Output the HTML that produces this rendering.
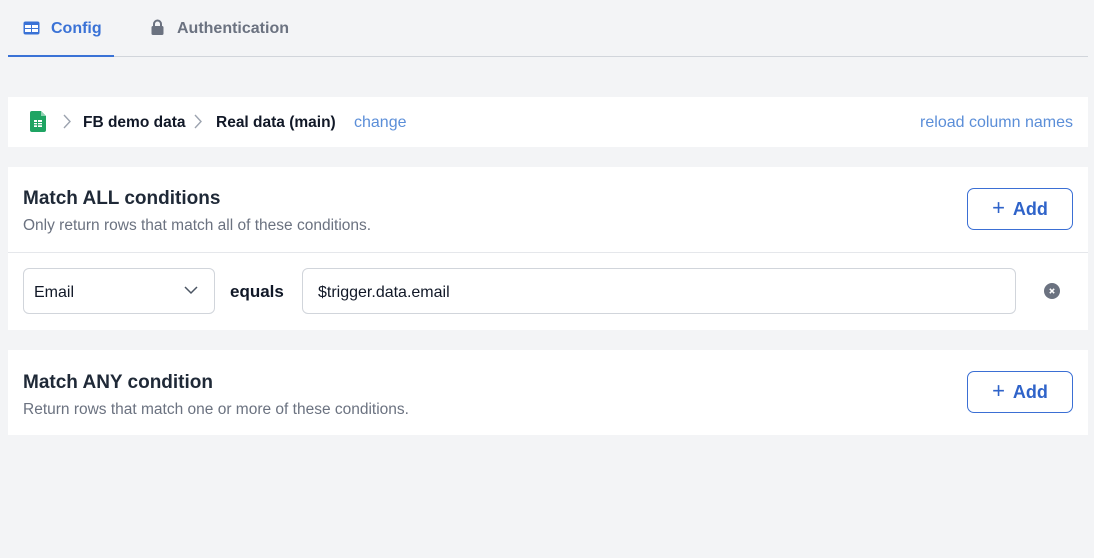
<!DOCTYPE html>
<html><head><style>
*{box-sizing:border-box;margin:0;padding:0}
body{width:1094px;height:558px;background:#f3f4f6;font-family:"Liberation Sans",sans-serif;position:relative;overflow:hidden;color:#111827}
.abs{position:absolute}
.card{position:absolute;left:8px;width:1080px;background:#fff}
.blue{color:#3a72d6}
.btn{position:absolute;left:967px;width:106px;height:42px;border:1px solid #3b6fd4;border-radius:7px;color:#2f63c9;font-weight:bold;font-size:18px;display:flex;align-items:center;justify-content:center;gap:8px}
.btn span{font-weight:normal;font-size:22px;margin-top:-3px}
h2{font-size:19px;font-weight:bold;color:#1f2937;position:absolute;left:15px}
.sub{position:absolute;left:15px;font-size:15.5px;color:#6b7280}
</style></head><body>
<div class="abs" style="left:8px;top:56px;width:1080px;height:1px;background:#d1d5db"></div>
<div class="abs" style="left:8px;top:55px;width:106px;height:2px;background:#3a72d6"></div>
<svg class="abs" style="left:23px;top:21px" width="17" height="14" viewBox="0 0 17 14"><rect x="0.5" y="0.5" width="16" height="13" rx="2" fill="#3a72d6"/><g fill="#fff"><rect x="2" y="4" width="6" height="3"/><rect x="9" y="4" width="6" height="3"/><rect x="2" y="8" width="6" height="3"/><rect x="9" y="8" width="6" height="3"/></g></svg>
<div class="abs blue" style="left:51px;top:20px;font-size:16px;font-weight:bold">Config</div>
<svg class="abs" style="left:151px;top:19px" width="13" height="16" viewBox="0 0 13 16"><path d="M3 7V5a3.5 3.5 0 0 1 7 0v2" stroke="#6b7280" stroke-width="2" fill="none"/><rect x="0.5" y="7" width="12" height="9" rx="1.5" fill="#6b7280"/></svg>
<div class="abs" style="left:177px;top:20px;font-size:16px;font-weight:bold;color:#6b7280">Authentication</div>

<div class="card" style="top:97px;height:50px">
<svg class="abs" style="left:22px;top:14px" width="16" height="21" viewBox="0 0 16 21"><path d="M0 2a2 2 0 0 1 2-2h9l5 5v14a2 2 0 0 1-2 2H2a2 2 0 0 1-2-2z" fill="#1fa463"/><path d="M11 0v5h5z" fill="#8ed1b1"/><rect x="4" y="9" width="8" height="7" fill="#fff"/><g stroke="#1fa463" stroke-width="1"><line x1="4" y1="11.5" x2="12" y2="11.5"/><line x1="4" y1="13.8" x2="12" y2="13.8"/><line x1="7.5" y1="9" x2="7.5" y2="16"/></g></svg>
<svg class="abs" style="left:55px;top:17px" width="9" height="15"><path d="M1 1l6 6.5L1 14" stroke="#9ca3af" stroke-width="1.4" fill="none"/></svg>
<div class="abs" style="left:75px;top:17px;font-size:15.5px;font-weight:bold">FB demo data</div>
<svg class="abs" style="left:186px;top:17px" width="9" height="15"><path d="M1 1l6 6.5L1 14" stroke="#9ca3af" stroke-width="1.4" fill="none"/></svg>
<div class="abs" style="left:208px;top:17px;font-size:15.5px;font-weight:bold">Real data (main)</div>
<div class="abs" style="left:346px;top:17px;font-size:16px;color:#5b8ed8">change</div>
<div class="abs" style="right:15px;top:17px;font-size:16px;color:#5b8ed8">reload column names</div>
</div>

<div class="card" style="top:167px;height:163px">
<h2 style="top:21px">Match ALL conditions</h2>
<div class="sub" style="top:50px">Only return rows that match all of these conditions.</div>
<div class="btn" style="left:959px;top:21px"><span>+</span>Add</div>
<div class="abs" style="left:0;top:85px;width:1080px;height:1px;background:#e5e7eb"></div>
<div class="abs" style="left:15px;top:101px;width:192px;height:46px;border:1px solid #d1d5db;border-radius:6px;font-size:16px;padding:15px 10px">Email</div>
<svg class="abs" style="left:176px;top:119px" width="14" height="9"><path d="M1 1l6 6 6-6" stroke="#4b5563" stroke-width="1.5" fill="none"/></svg>
<div class="abs" style="left:222px;top:115px;font-size:17px;font-weight:bold">equals</div>
<div class="abs" style="left:294px;top:101px;width:714px;height:46px;border:1px solid #d1d5db;border-radius:6px;font-size:16px;padding:15px 15px">$trigger.data.email</div>
<svg class="abs" style="left:1036px;top:116px" width="16" height="16"><circle cx="8" cy="8" r="8" fill="#6b7280"/><path d="M5.8 5.8l4.4 4.4M10.2 5.8l-4.4 4.4" stroke="#fff" stroke-width="1.5"/></svg>
</div>

<div class="card" style="top:350px;height:85px">
<h2 style="top:22px">Match ANY condition</h2>
<div class="sub" style="top:51px">Return rows that match one or more of these conditions.</div>
<div class="btn" style="left:959px;top:21px"><span>+</span>Add</div>
</div>
</body></html>
